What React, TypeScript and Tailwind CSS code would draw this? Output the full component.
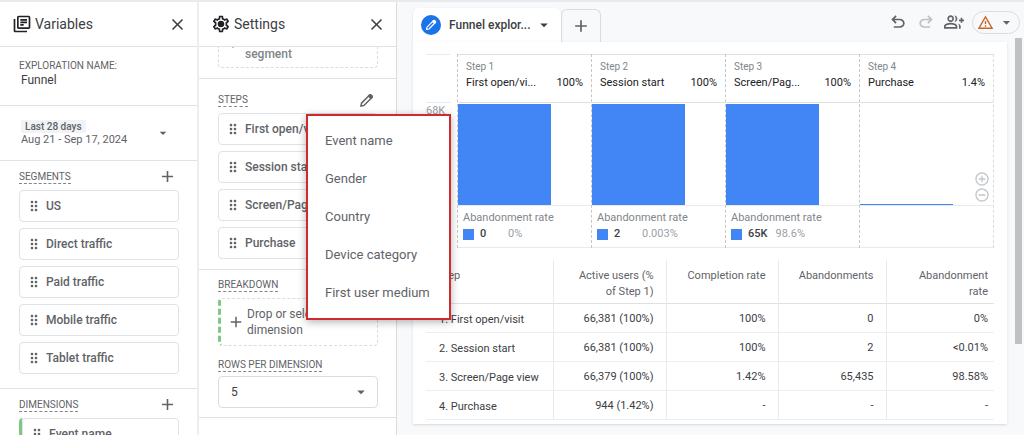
import React from 'react';
import {
  MdAdd,
  MdAddCircleOutline,
  MdArrowDropDown,
  MdClose,
  MdDragIndicator,
  MdOutlineGroupAdd,
  MdOutlineLibraryBooks,
  MdOutlineSettings,
  MdOutlineWarningAmber,
  MdRemoveCircleOutline,
} from 'react-icons/md';

const segments = ['US', 'Direct traffic', 'Paid traffic', 'Mobile traffic', 'Tablet traffic'];
const steps = ['First open/visit', 'Session start', 'Screen/Page view', 'Purchase'];
const menuItems = ['Event name', 'Gender', 'Country', 'Device category', 'First user medium'];

const funnel = [
  { step: 'Step 1', name: 'First open/vi...', rate: '100%', fill: 100, lost: '0', lostRate: '0%' },
  { step: 'Step 2', name: 'Session start', rate: '100%', fill: 100, lost: '2', lostRate: '0.003%' },
  { step: 'Step 3', name: 'Screen/Pag...', rate: '100%', fill: 100, lost: '65K', lostRate: '98.6%' },
  { step: 'Step 4', name: 'Purchase', rate: '1.4%', fill: 1.4, lost: '', lostRate: '' },
];

const rows = [
  ['1. First open/visit', '66,381 (100%)', '100%', '0', '0%'],
  ['2. Session start', '66,381 (100%)', '100%', '2', '<0.01%'],
  ['3. Screen/Page view', '66,379 (100%)', '1.42%', '65,435', '98.58%'],
  ['4. Purchase', '944 (1.42%)', '-', '-', '-'],
];

const UndoIcon = ({ className = '' }: { className?: string }) => (
  <svg viewBox="0 -960 960 960" width="20" height="20" fill="currentColor" className={className}>
    <path d="M280-200v-80h284q63 0 109.5-40T720-420q0-60-46.5-100T564-560H312l104 104-56 56-200-200 200-200 56 56-104 104h252q97 0 166.5 63T800-420q0 94-69.5 157T564-200H280Z" />
  </svg>
);

const PencilIcon = ({ size }: { size: number }) => (
  <svg viewBox="0 0 16 16" width={size} height={size} fill="none" stroke="currentColor" strokeWidth="1.6" strokeLinejoin="round">
    <path d="M2 14l.7-3.2 8.6-8.6a1.2 1.2 0 0 1 1.7 0l.8.8a1.2 1.2 0 0 1 0 1.7l-8.6 8.6z" />
    <path d="M10.2 3.3l2.5 2.5 1.3-1.3-2.5-2.5z" fill="currentColor" />
  </svg>
);

const GearIcon = () => (
  <span className="relative flex items-center justify-center">
    <MdOutlineSettings size={20} />
    <span className="absolute size-1.5 rounded-full bg-current" />
  </span>
);

const Label = ({ children }: { children: React.ReactNode }) => (
  <span className="border-b border-dashed border-[#80868b] text-[10px] leading-[13px] text-[#5f6368]">{children}</span>
);

const Chip = ({ label }: { label: string }) => (
  <button className="flex h-8 w-full items-center gap-1 rounded border border-[#e0e3e6] bg-white pl-1.5 text-left text-xs font-medium text-[#5f6368]">
    <MdDragIndicator size={16} />
    {label}
  </button>
);

const PanelHeader = ({ icon, title }: { icon: React.ReactNode; title: string }) => (
  <div className="flex h-[45px] shrink-0 items-center border-b border-[#e0e3e6] pr-2.5 pl-3">
    <span className="text-[#202124]">{icon}</span>
    <h2 className="ml-[3px] flex-1 text-sm text-[#3c4043]">{title}</h2>
    <button aria-label={`Close ${title}`} className="text-[#3c4043]">
      <MdClose size={19} />
    </button>
  </div>
);

const Variables = () => (
  <aside className="flex w-[199px] shrink-0 flex-col border-r-2 border-[#eceef0] bg-white">
    <PanelHeader icon={<MdOutlineLibraryBooks size={20} />} title="Variables" />

    <div className="flex h-[59px] shrink-0 flex-col border-b border-[#e0e3e6] pt-3 pl-[19px]">
      <label htmlFor="name" className="text-[10px] leading-[14px] text-[#5f6368]">EXPLORATION NAME:</label>
      <input id="name" defaultValue="Funnel" className="w-40 pl-0.5 text-xs leading-[14px] text-[#3c4043] outline-none" />
    </div>

    <button className="flex h-[55px] shrink-0 items-center border-b border-[#e0e3e6] pr-[26px] pl-[21px] text-left">
      <span className="flex flex-1 flex-col items-start">
        <span className="bg-[#f1f3f4] px-1 text-[10px] leading-[13px] font-medium text-[#5f6368]">Last 28 days</span>
        <span className="text-[11px] leading-[14px] text-[#5f6368]">Aug 21 - Sep 17, 2024</span>
      </span>
      <MdArrowDropDown size={16} className="text-[#5f6368]" />
    </button>

    <section className="h-[228px] shrink-0 border-b border-[#e0e3e6] pr-[18px] pl-[19px]">
      <div className="flex h-[29px] items-center justify-between pt-0.5 pr-0.5">
        <Label>SEGMENTS</Label>
        <button aria-label="Add segment" className="text-[#5f6368]"><MdAdd size={19} /></button>
      </div>
      <div className="flex flex-col gap-1.5">
        {segments.map((s) => <Chip key={s} label={s} />)}
      </div>
    </section>

    <section className="pr-[18px] pl-[19px]">
      <div className="flex h-[29px] items-center justify-between pt-0.5 pr-0.5">
        <Label>DIMENSIONS</Label>
        <button aria-label="Add dimension" className="text-[#5f6368]"><MdAdd size={19} /></button>
      </div>
      <div className="rounded border-l-3 border-[#81c784]">
        <Chip label="Event name" />
      </div>
    </section>
  </aside>
);

const Settings = () => (
  <aside className="relative flex w-[198px] shrink-0 flex-col border-r border-[#dadce0] bg-white">
    <PanelHeader icon={<GearIcon />} title="Settings" />

    {/* scrolled end of the segment drop zone */}
    <div className="h-8 shrink-0 border-b border-[#e0e3e6] pr-[18px] pl-[19px]">
      <div className="flex h-[21px] items-start gap-1 overflow-hidden rounded-b border border-t-0 border-dashed border-[#dadce0] pl-1.5 text-xs leading-[14px] font-medium text-[#80868b]">
        <MdAdd size={16} className="-mt-3" />
        segment
      </div>
    </div>

    <section className="h-[191px] shrink-0 border-b border-[#e0e3e6] pr-[18px] pl-[19px]">
      <div className="flex h-[34px] items-center justify-between pt-2 pr-1">
        <Label>STEPS</Label>
        <button aria-label="Edit steps" className="text-[#5f6368]"><PencilIcon size={15} /></button>
      </div>
      <div className="flex flex-col gap-1.5">
        {steps.map((s) => <Chip key={s} label={s} />)}
      </div>
    </section>

    <section className="flex h-[148px] shrink-0 flex-col items-start border-b border-[#e0e3e6] pt-2 pr-[18px] pl-[19px]">
      <Label>BREAKDOWN</Label>
      <button className="mt-1.5 flex h-12 w-full items-center gap-0.5 rounded border border-l-3 border-dashed border-[#dadce0] border-l-[#81c784] pl-1.5 text-left text-xs text-[#5f6368]">
        <MdAdd size={18} />
        <span className="leading-4">Drop or select<br />dimension</span>
      </button>
      <label htmlFor="rows" className="mt-3 mb-1 flex">
        <Label>ROWS PER DIMENSION</Label>
      </label>
      <div className="relative w-full">
        <select id="rows" className="block h-8 w-full appearance-none rounded border border-[#dadce0] bg-white pl-3 text-xs text-[#3c4043]">
          <option>5</option>
        </select>
        <MdArrowDropDown size={18} className="pointer-events-none absolute top-[7px] right-2 text-[#5f6368]" />
      </div>
    </section>

    <div className="absolute top-28 left-[107px] z-10 flex w-[145px] flex-col border-2 border-[#cf2a30] bg-white py-1.5 shadow-[0_2px_8px_rgba(0,0,0,0.3)]">
      {menuItems.map((m) => (
        <button key={m} className="h-[38px] pl-[17px] text-left text-[13px] text-[#5f6368]">{m}</button>
      ))}
    </div>
  </aside>
);

const Tabs = () => (
  <div className="flex h-10 shrink-0 items-end">
    <button className="flex h-[34px] w-[148px] items-center rounded-t-md bg-white pr-2 pl-2 text-[#3c4043] shadow-sm">
      <span className="flex size-5 items-center justify-center rounded-full bg-[#1a73e8] text-white">
        <PencilIcon size={12} />
      </span>
      <span className="flex-1 pl-2 text-left text-xs font-medium">Funnel explor...</span>
      <MdArrowDropDown size={18} />
    </button>
    <button aria-label="Add tab" className="flex h-[33px] w-10 items-center justify-center rounded-t-md border border-b-0 border-[#dadce0] text-[#5f6368]">
      <MdAdd size={20} />
    </button>
    <div className="ml-auto flex items-center self-center text-[#5f6368]">
      <button aria-label="Undo"><UndoIcon /></button>
      <button aria-label="Redo" className="ml-2 text-[#bdc1c6]"><UndoIcon className="-scale-x-100" /></button>
      <button aria-label="Share" className="ml-2"><MdOutlineGroupAdd size={20} /></button>
      <button aria-label="Data quality" className="ml-2 flex h-[23px] w-12 items-center justify-between rounded-full border border-[#dadce0] pr-1 pl-1">
        <MdOutlineWarningAmber size={17} className="text-[#c5672d]" />
        <MdArrowDropDown size={17} />
      </button>
    </div>
  </div>
);

const FunnelChart = () => (
  <div className="relative flex text-[11px]">
    <div className="w-[31px] shrink-0">
      <div className="h-[49px] w-6 border-y border-[#e8eaed]" />
      <div className="leading-4 text-[#9aa0a6]">68K</div>
    </div>
    <div className="flex flex-1 border-r border-dashed border-[#dadce0]">
      {funnel.map((f) => (
        <div key={f.step} className="flex-1 border-l border-dashed border-[#c4c7ca]">
          <div className="h-[49px] border-y border-solid border-[#e0e0e0] pt-[5px] pr-2 pl-2">
            <div className="text-[10px] leading-[14px] text-[#80868b]">{f.step}</div>
            <div className="flex justify-between leading-[18px] text-[#202124]">
              <span>{f.name}</span>
              <span>{f.rate}</span>
            </div>
          </div>
          <div className="flex h-[103px] items-end border-b border-solid border-[#e8eaed] pt-px">
            <div className="w-[70%] bg-[#4285f4]" style={{ height: `${f.fill}%` }} />
          </div>
          <div className="h-[42px] border-b border-solid border-[#e8eaed] pt-1 pl-[5px] leading-4">
            {f.lost && (
              <>
                <div className="text-[#80868b]">Abandonment rate</div>
                <div className="flex items-center">
                  <span className="mr-1.5 size-[11px] bg-[#4285f4]" />
                  <span className="min-w-5 pr-2 font-medium text-[#3c4043]">{f.lost}</span>
                  <span className={f.lost === '65K' ? 'text-[#9aa0a6]' : 'pl-2 text-[#9aa0a6]'}>{f.lostRate}</span>
                </div>
              </>
            )}
          </div>
        </div>
      ))}
    </div>
    <div className="absolute top-[117px] right-1 flex flex-col text-[#c4c7ca]">
      <button aria-label="Zoom in"><MdAddCircleOutline size={16} /></button>
      <button aria-label="Zoom out"><MdRemoveCircleOutline size={16} /></button>
    </div>
  </div>
);

const StepsTable = () => (
  <table className="mt-3 w-full table-fixed border-collapse text-right text-[11px] text-[#5f6368]">
    <colgroup>
      <col className="w-[127px]" />
      <col className="w-[113px]" />
      <col className="w-[112px]" />
      <col className="w-[108px]" />
      <col />
    </colgroup>
    <thead>
      <tr className="h-[43px] border-b border-[#e0e0e0] align-top leading-4">
        <th className="border-r border-[#e8eaed] pt-2 pl-3 text-left font-normal">Step</th>
        <th className="border-r border-[#e8eaed] pt-2 pr-3 font-normal">Active users (%<br />of Step 1)</th>
        <th className="border-r border-[#e8eaed] pt-2 pr-3 font-normal">Completion rate</th>
        <th className="border-r border-[#e8eaed] pt-2 pr-3 font-normal">Abandonments</th>
        <th className="pt-2 pr-1.5 font-normal">Abandonment<br />rate</th>
      </tr>
    </thead>
    <tbody>
      {rows.map((r) => (
        <tr key={r[0]} className="h-[29px] border-b border-[#eceef0] text-[#3c4043]">
          <td className="border-r border-[#e8eaed] pt-1.5 pl-[13px] text-left">{r[0]}</td>
          <td className="border-r border-[#e8eaed] pt-1 pr-3">{r[1]}</td>
          <td className="border-r border-[#e8eaed] pt-1 pr-3">{r[2]}</td>
          <td className="border-r border-[#e8eaed] pt-1 pr-3">{r[3]}</td>
          <td className="pt-1 pr-1.5">{r[4]}</td>
        </tr>
      ))}
    </tbody>
  </table>
);

const App = () => {
  return (
    <div className="flex h-screen overflow-hidden border-t-2 border-[#e8eaed] bg-[#f8f9fa] font-['Roboto',sans-serif]">
      <Variables />
      <Settings />
      <main className="flex min-w-0 flex-1 flex-col pl-4">
        <div className="pr-1"><Tabs /></div>
        <div className="flex min-h-0 flex-1">
          <div className="flex-1 self-start bg-white px-[13px] pt-3 pb-1 shadow-sm">
            <FunnelChart />
            <StepsTable />
          </div>
          <div className="-mt-1 mr-0.5 ml-2 h-[306px] w-[7px] bg-[#c1c1c1]" />
        </div>
      </main>
    </div>
  );
};

export default App;
